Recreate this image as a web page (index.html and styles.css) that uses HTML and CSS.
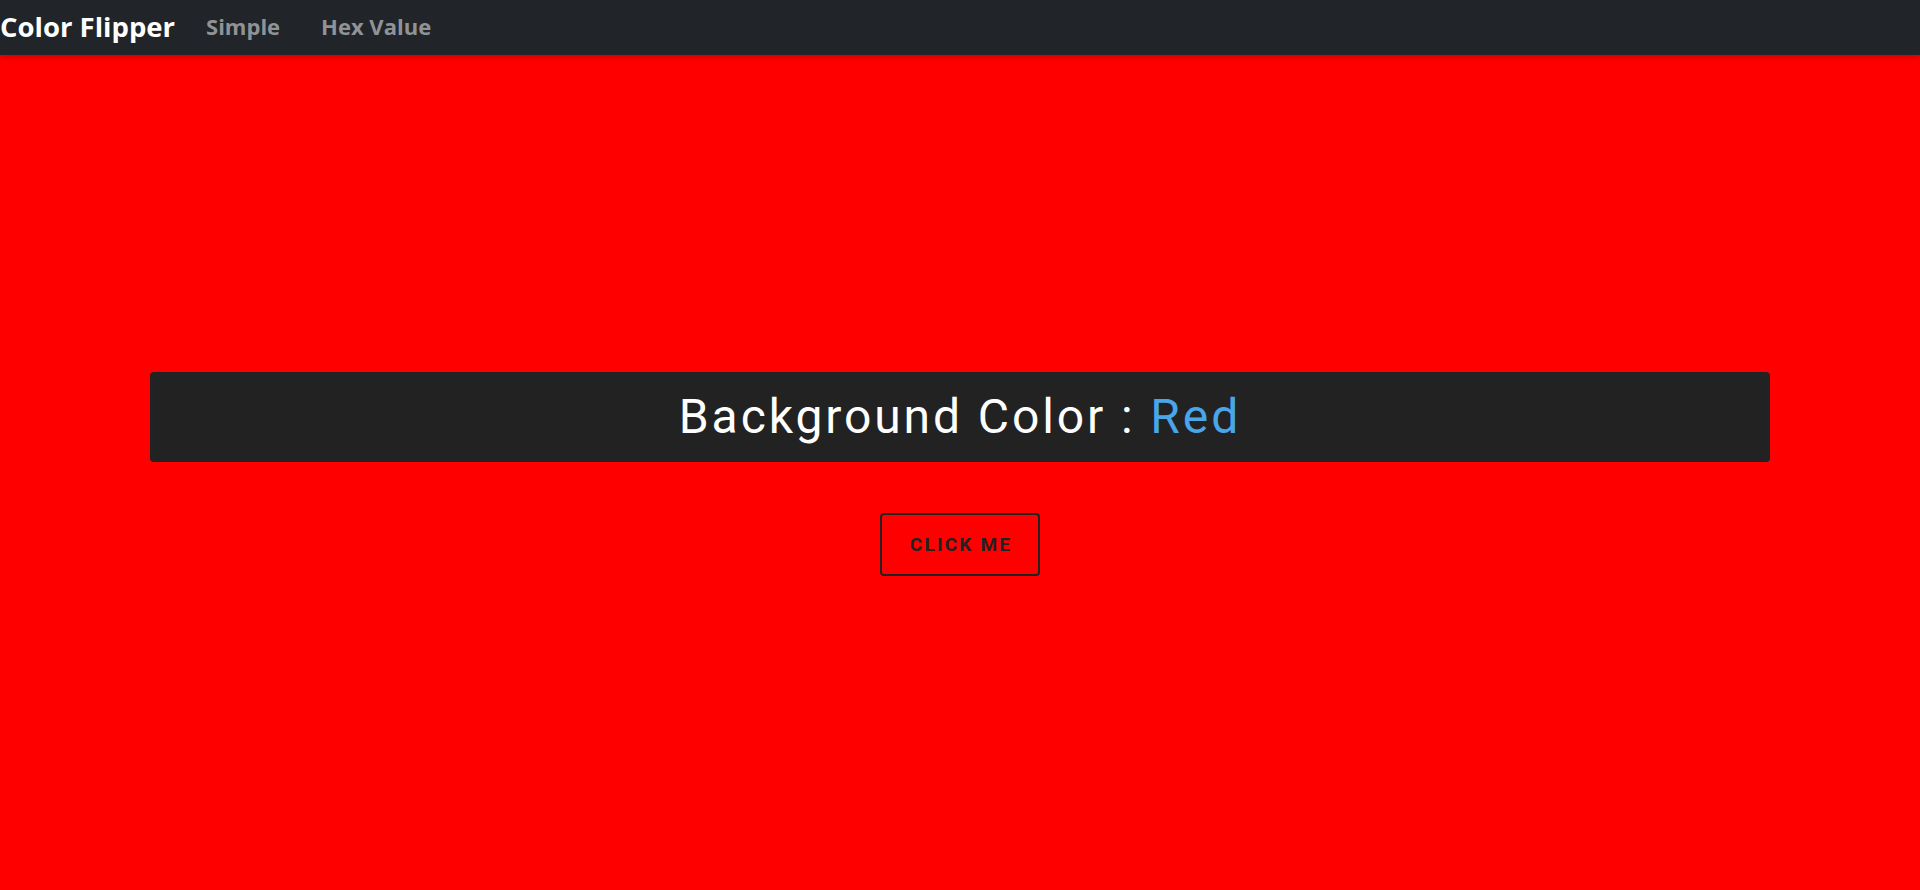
FILE: index.html
```html
<!DOCTYPE html>
<html lang="en">
<head>
<meta charset="utf-8">
<title>Color Flipper</title>
<link rel="stylesheet" href="styles.css">
</head>
<body>
<nav class="navbar">
  <a class="brand" href="#">Color Flipper</a>
  <a class="nav-link" href="#">Simple</a>
  <a class="nav-link" href="#">Hex Value</a>
</nav>
<main class="main">
  <div class="container">
    <h2 class="title">Background Color : <span class="color">Red</span></h2>
    <button class="btn-hero" type="button">Click Me</button>
  </div>
</main>
</body>
</html>
```

FILE: styles.css
```css
* {
  box-sizing: border-box;
  margin: 0;
  padding: 0;
}

html, body {
  height: 100%;
}

body {
  font-family: Roboto, "Liberation Sans", sans-serif;
  background: #ff0000;
  display: flex;
  flex-direction: column;
  overflow: hidden;
}

.navbar {
  height: 55px;
  padding-bottom: 3px;
  background: #212529;
  display: flex;
  align-items: center;
  font-family: "Open Sans", "Liberation Sans", sans-serif;
  font-weight: 700;
  box-shadow: 0 2px 6px rgba(0, 0, 0, 0.2);
  position: relative;
  z-index: 1;
}

.brand {
  color: #ffffff;
  text-decoration: none;
  font-size: 27.5px;
  margin-right: 31px;
}

.nav-link {
  color: #909396;
  text-decoration: none;
  font-size: 22px;
  margin-right: 41px;
}

.main {
  flex: 1;
  display: flex;
  align-items: center;
  justify-content: center;
}

.container {
  width: 1620px;
  display: flex;
  flex-direction: column;
  align-items: center;
  gap: 51px;
  padding-top: 2px;
}

.title {
  width: 100%;
  background: #222222;
  color: #ffffff;
  font-weight: 400;
  font-size: 48px;
  line-height: 58px;
  letter-spacing: 2.9px;
  text-align: center;
  padding: 16px;
  border-radius: 4px;
}

.color {
  color: #49a6e9;
}

.btn-hero {
  font-family: Roboto, "Liberation Sans", sans-serif;
  text-transform: uppercase;
  background: transparent;
  color: #222222;
  letter-spacing: 2.2px;
  font-weight: 700;
  font-size: 19px;
  line-height: 31px;
  border: 2px solid #222222;
  padding: 14px 26px 14px 28px;
  border-radius: 4px;
  cursor: pointer;
}
```
